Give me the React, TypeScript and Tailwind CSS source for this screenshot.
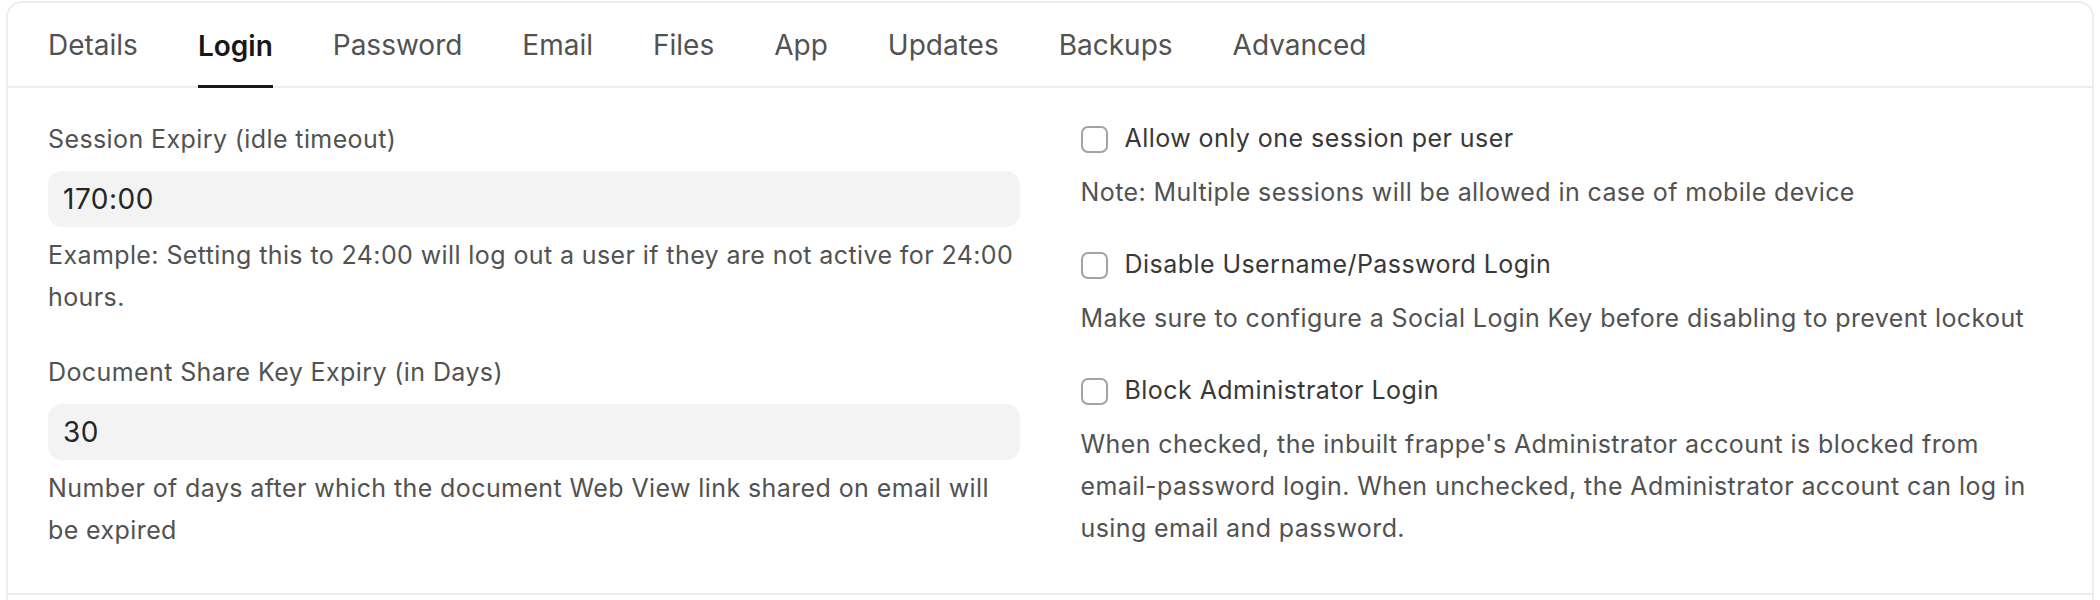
import React from 'react'

const tabs = ['Details', 'Login', 'Password', 'Email', 'Files', 'App', 'Updates', 'Backups', 'Advanced']

const Field = ({ label, value, help }: { label: string; value: string; help: string }) => (
  <div>
    <div className="text-[25px] leading-[36px] tracking-[0.4px] text-[#525252]">{label}</div>
    <div className="mt-[14px] h-[56px] rounded-[14px] bg-[#f3f3f3] px-[15px] flex items-center text-[28px] tracking-[0.5px] text-[#262626]">
      {value}
    </div>
    <p className="mt-[7px] text-[25px] leading-[42px] tracking-[0.4px] text-[#525252]">{help}</p>
  </div>
)

const Check = ({ label, children }: { label: string; children: React.ReactNode }) => (
  <div>
    <label className="flex items-center gap-[17px] h-[36px]">
      <span className="w-[27px] h-[27px] rounded-[7px] border-2 border-[#a3a3a3] bg-white" />
      <span className="text-[25px] tracking-[0.45px] text-[#383838]">{label}</span>
    </label>
    <p className="mt-[14px] text-[25px] leading-[42px] tracking-[0.4px] text-[#525252]">{children}</p>
  </div>
)

export default function App() {
  return (
    <div className="min-h-screen bg-white px-[6px] pt-[1px]" style={{ fontFamily: 'Inter, "Noto Sans", sans-serif' }}>
      <div className="h-[640px] rounded-t-[16px] border-2 border-[#ededed]">
        <div className="flex h-[85px] gap-[60px] border-b-2 border-[#ededed] px-[40px]">
          {tabs.map((t) => (
            <div
              key={t}
              className={
                t === 'Login'
                  ? 'flex items-center border-b-[3px] border-[#171717] pt-[3px] text-[28px] font-semibold text-[#171717] -mb-[2px]'
                  : 'flex items-center text-[28px] text-[#525252]'
              }
            >
              {t}
            </div>
          ))}
        </div>
        <div className="grid grid-cols-2 gap-x-[61px] border-b-2 border-[#ededed] px-[40px] pt-[33px] pb-[42px]">
          <div className="flex flex-col gap-[36px]">
            <Field
              label="Session Expiry (idle timeout)"
              value="170:00"
              help="Example: Setting this to 24:00 will log out a user if they are not active for 24:00 hours."
            />
            <Field
              label="Document Share Key Expiry (in Days)"
              value="30"
              help="Number of days after which the document Web View link shared on email will be expired"
            />
          </div>
          <div className="flex flex-col gap-[34px]">
            <Check label="Allow only one session per user">Note: Multiple sessions will be allowed in case of mobile device</Check>
            <Check label="Disable Username/Password Login">
              Make sure to configure a Social Login Key before disabling to prevent lockout
            </Check>
            <Check label="Block Administrator Login">
              When checked, the inbuilt frappe's Administrator account is blocked from
              <br />
              email-password login. When unchecked, the Administrator account can log in using email and password.
            </Check>
          </div>
        </div>
      </div>
    </div>
  )
}
